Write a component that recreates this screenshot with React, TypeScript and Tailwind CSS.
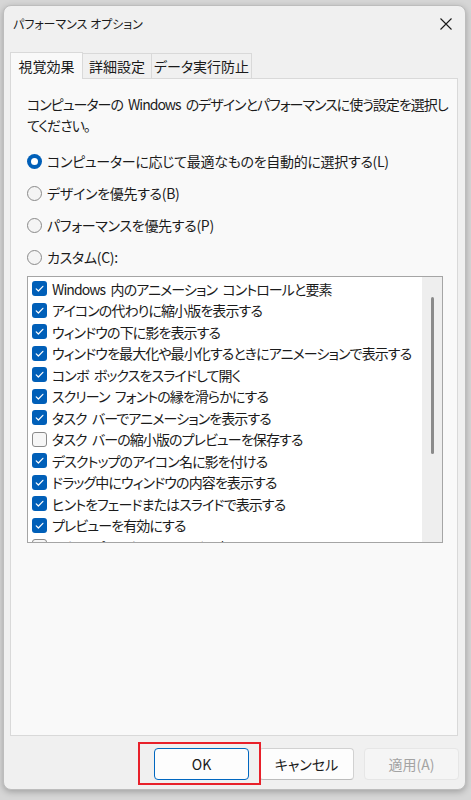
import React from "react";

const font = "[font-family:'Noto_Sans_CJK_JP','Noto_Sans',sans-serif] [font-feature-settings:'palt']";

const items: { label: string; on: boolean }[] = [
  { label: "Windows 内のアニメーション コントロールと要素", on: true },
  { label: "アイコンの代わりに縮小版を表示する", on: true },
  { label: "ウィンドウの下に影を表示する", on: true },
  { label: "ウィンドウを最大化や最小化するときにアニメーションで表示する", on: true },
  { label: "コンボ ボックスをスライドして開く", on: true },
  { label: "スクリーン フォントの縁を滑らかにする", on: true },
  { label: "タスク バーでアニメーションを表示する", on: true },
  { label: "タスク バーの縮小版のプレビューを保存する", on: false },
  { label: "デスクトップのアイコン名に影を付ける", on: true },
  { label: "ドラッグ中にウィンドウの内容を表示する", on: true },
  { label: "ヒントをフェードまたはスライドで表示する", on: true },
  { label: "プレビューを有効にする", on: true },
  { label: "マウス ポインターの下に影を表示する", on: false },
  { label: "メニューをフェードまたはスライドして表示する", on: true },
];

function Radio({ checked, label }: { checked?: boolean; label: string }) {
  return (
    <div className="flex h-[32px] items-center gap-[5px]">
      {checked ? (
        <span className="flex h-[15px] w-[15px] items-center justify-center rounded-full bg-[#005fb8]">
          <span className="h-[7px] w-[7px] rounded-full bg-white" />
        </span>
      ) : (
        <span className="h-[15px] w-[15px] rounded-full border border-[#8a8a8a] bg-[#f4f4f4]" />
      )}
      <span className="text-[14px] leading-none tracking-[-0.3px] text-[#1b1b1b]">{label}</span>
    </div>
  );
}

function Check({ on }: { on: boolean }) {
  return on ? (
    <span className="flex h-[15px] w-[15px] shrink-0 items-center justify-center rounded-[3px] bg-[#005fb8]">
      <svg width="11" height="11" viewBox="0 0 11 11" fill="none">
        <path d="M2.2 5.8 L4.4 8 L8.9 3.3" stroke="white" strokeWidth="1.2" strokeLinecap="round" strokeLinejoin="round" />
      </svg>
    </span>
  ) : (
    <span className="h-[15px] w-[15px] shrink-0 rounded-[3px] border border-[#8a8a8a] bg-[#f6f6f6]" />
  );
}

export default function App() {
  return (
    <div className={`relative flex h-[800px] w-[471px] overflow-hidden bg-[#d6d6d6] pb-[10px] pl-[3px] pr-[5px] pt-[5px] ${font}`}>
      <div className="flex min-w-0 flex-1 flex-col rounded-[8px] border border-[#bdbdbd] bg-[#f0f0f0] shadow-[0_2px_6px_rgba(0,0,0,0.25)]">
        {/* title bar */}
        <div className="flex h-[36px] items-center justify-between pl-[9px] pr-[10px]">
          <span className="text-[12px] text-[#1a1a1a]">パフォーマンス オプション</span>
          <svg width="12" height="12" viewBox="0 0 12 12" className="mr-[3px]">
            <path d="M0.5 0.5 L11.5 11.5 M11.5 0.5 L0.5 11.5" stroke="#1a1a1a" strokeWidth="1.1" />
          </svg>
        </div>

        {/* tabs */}
        <div className="mt-[10px] flex items-end pl-[6px]">
          <div className="relative z-10 -mb-px flex h-[27px] w-[73px] items-center justify-center whitespace-nowrap border border-b-0 border-[#d9d9d9] bg-[#f9f9f9] text-[14px] text-[#1a1a1a]">
            視覚効果
          </div>
          <div className="flex h-[25px] w-[69px] items-center justify-center whitespace-nowrap border border-b-0 border-l-0 border-[#d9d9d9] bg-[#f0f0f0] text-[14px] text-[#1a1a1a]">
            詳細設定
          </div>
          <div className="flex h-[25px] w-[100px] items-center justify-center whitespace-nowrap border border-b-0 border-l-0 border-[#d9d9d9] bg-[#f0f0f0] text-[14px] text-[#1a1a1a]">
            データ実行防止
          </div>
        </div>

        {/* page */}
        <div className="ml-[6px] mr-[7px] flex h-[658px] min-w-0 flex-col border border-[#d9d9d9] bg-[#f9f9f9] pl-[16px] pr-[14px] pt-[15px]">
          <p className="text-[14px] leading-[21px] tracking-[-1px] [word-spacing:3px] text-[#1b1b1b]">
            <span className="whitespace-nowrap">コンピューターの Windows のデザインとパフォーマンスに使う設定を選択し</span>
            <br />
            てください。
          </p>

          <div className="mt-[9px] flex flex-col">
            <Radio checked label="コンピューターに応じて最適なものを自動的に選択する(L)" />
            <Radio label="デザインを優先する(B)" />
            <Radio label="パフォーマンスを優先する(P)" />
            <Radio label="カスタム(C):" />
          </div>

          {/* effects list */}
          <div className="mt-[3px] flex h-[267px] min-w-0 border border-[#a5a5a5] bg-white">
            <div className="flex min-w-0 flex-1 flex-col overflow-hidden pl-[4px] pt-px">
              {items.map((it) => (
                <div key={it.label} className="flex h-[21.5px] shrink-0 items-center gap-[5px]">
                  <Check on={it.on} />
                  <span className="whitespace-nowrap text-[14px] leading-none tracking-[-0.9px] [word-spacing:3px] text-[#1b1b1b]">{it.label}</span>
                </div>
              ))}
            </div>
            <div className="flex w-[20px] shrink-0 justify-center bg-[#eeeeee] pt-[20px]">
              <div className="h-[157px] w-[3px] rounded-full bg-[#8a8a8a]" />
            </div>
          </div>
        </div>

        {/* buttons */}
        <div className="mt-[12px] flex justify-end gap-[10px] pr-[6px]">
          <button className="h-[32px] w-[95px] rounded-[4px] border border-[#0067c0] bg-[#fdfdfd] text-[14px] text-[#1a1a1a]">
            OK
          </button>
          <button className="h-[32px] w-[95px] rounded-[4px] border border-[#d1d1d1] border-b-[#bcbcbc] bg-[#fdfdfd] text-[14px] text-[#1a1a1a]">
            キャンセル
          </button>
          <button className="h-[32px] w-[95px] rounded-[4px] border border-[#e6e6e6] bg-[#f5f5f5] text-[14px] text-[#a3a3a3]">
            適用(A)
          </button>
        </div>
      </div>

      {/* highlight around the OK button */}
      <div className="pointer-events-none absolute left-[138px] top-[742px] h-[43px] w-[123px] border-2 border-[#e8202a]" />
    </div>
  );
}
